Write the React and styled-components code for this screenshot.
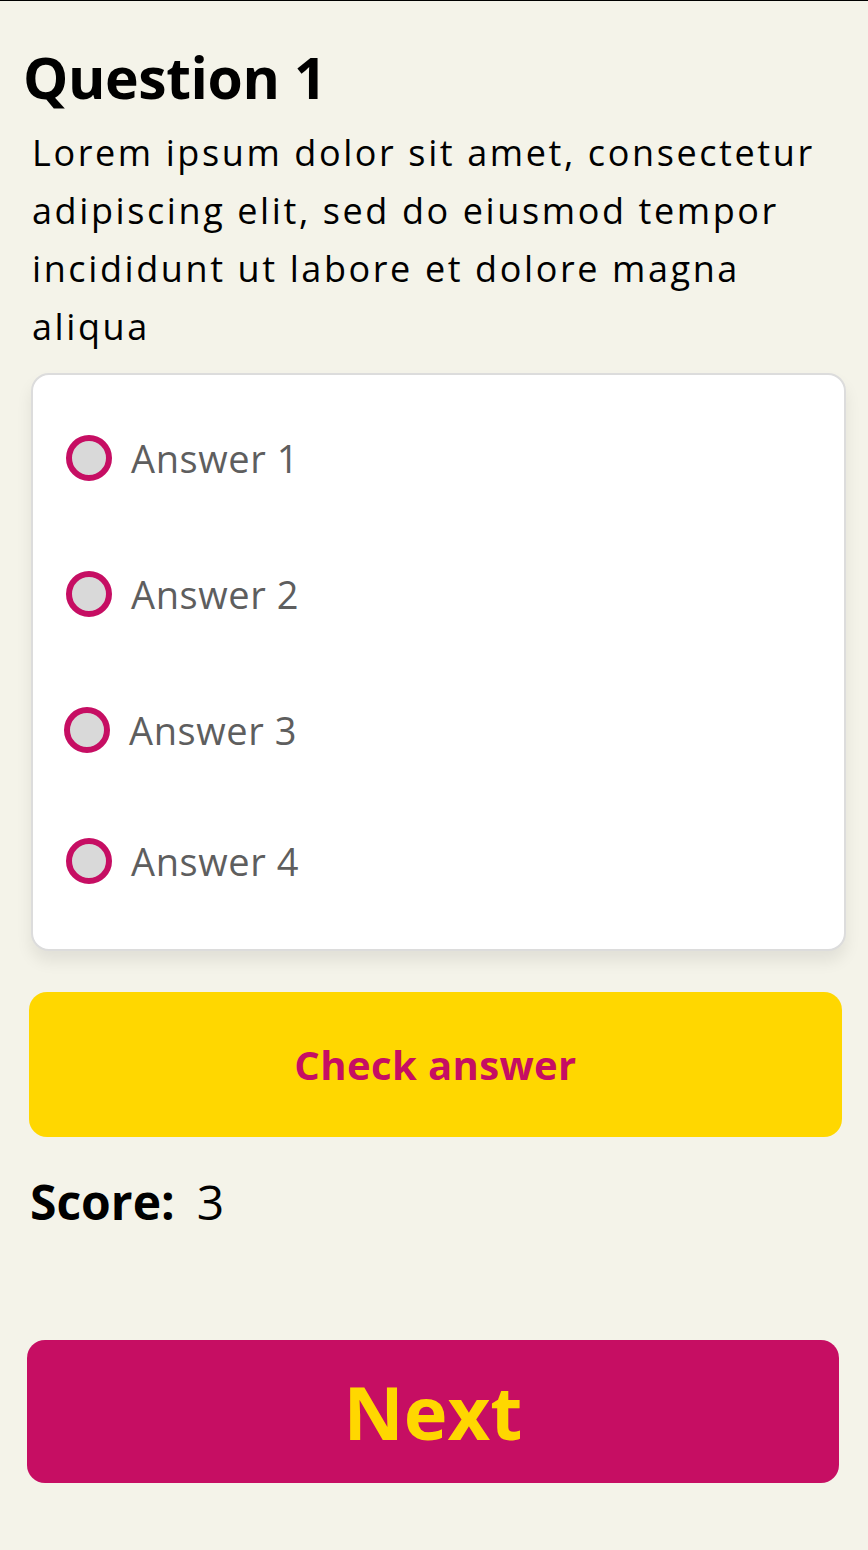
import React from 'react';
import styled, { createGlobalStyle } from 'styled-components';

const GlobalStyle = createGlobalStyle`
  html, body {
    margin: 0;
    padding: 0;
    background: #f4f3e9;
  }
  * {
    box-sizing: border-box;
  }
`;

const Page = styled.div`
  min-height: 1550px;
  border-top: 1px solid #000;
  padding: 0 26px 0 25px;
  font-family: 'Open Sans', 'Noto Sans', sans-serif;
  color: #000;
`;

const Title = styled.h1`
  margin: 40px 0 0 -2px;
  font-size: 57px;
  font-weight: 700;
  line-height: 72px;
  letter-spacing: -0.4px;
`;

const Question = styled.p`
  margin: 11px 0 0;
  padding-left: 7px;
  font-size: 36px;
  line-height: 58px;
  letter-spacing: 2.6px;
`;

const Card = styled.div`
  margin: 17px -4px 0 6px;
  padding: 15px 0 25px;
  background: #fff;
  border: 2px solid #dcdcdc;
  border-radius: 18px;
  box-shadow: 0 10px 16px rgba(0, 0, 0, 0.08);
`;

const AnswerRow = styled.label`
  display: flex;
  align-items: center;
  gap: 19px;
  height: ${({ $h }) => $h || 136}px;
  padding-left: ${({ $shift }) => 33 - ($shift || 0)}px;
  font-size: 38px;
  letter-spacing: 0.6px;
  color: #5e5e5e;
  cursor: pointer;
`;

const Radio = styled.span`
  flex: none;
  width: 46px;
  height: 46px;
  border-radius: 50%;
  border: 6px solid #c60e63;
  background: #d9d9d9;
`;

const CheckButton = styled.button`
  display: block;
  width: 813px;
  height: 145px;
  margin: 41px 0 0 4px;
  border: none;
  border-radius: 18px;
  background: #ffd700;
  color: #c60e63;
  font-family: inherit;
  font-size: 40px;
  font-weight: 700;
  letter-spacing: 0.4px;
  cursor: pointer;
`;

const Score = styled.div`
  display: flex;
  align-items: baseline;
  gap: 22px;
  margin: 37px 0 0 5px;
  font-size: 48px;
  line-height: 56px;
`;

const ScoreLabel = styled.span`
  font-weight: 700;
`;

const ScoreValue = styled.span`
  font-weight: 400;
`;

const NextButton = styled.button`
  display: block;
  width: 812px;
  height: 143px;
  margin: 110px 0 0 2px;
  border: none;
  border-radius: 18px;
  background: #c60e63;
  color: #ffd700;
  font-family: inherit;
  font-size: 74px;
  font-weight: 700;
  letter-spacing: 0;
  cursor: pointer;
`;

const answers = [
  { text: 'Answer 1' },
  { text: 'Answer 2' },
  { text: 'Answer 3', shift: 2 },
  { text: 'Answer 4', h: 126 },
];

const App = () => (
  <>
    <GlobalStyle />
    <Page>
      <Title>Question 1</Title>
      <Question>
        Lorem ipsum dolor sit amet, consectetur adipiscing elit, sed do eiusmod
        tempor incididunt ut labore et dolore magna aliqua
      </Question>
      <Card>
        {answers.map((a) => (
          <AnswerRow key={a.text} $shift={a.shift} $h={a.h}>
            <Radio />
            {a.text}
          </AnswerRow>
        ))}
      </Card>
      <CheckButton>Check answer</CheckButton>
      <Score>
        <ScoreLabel>Score:</ScoreLabel>
        <ScoreValue>3</ScoreValue>
      </Score>
      <NextButton>Next</NextButton>
    </Page>
  </>
);

export default App;
